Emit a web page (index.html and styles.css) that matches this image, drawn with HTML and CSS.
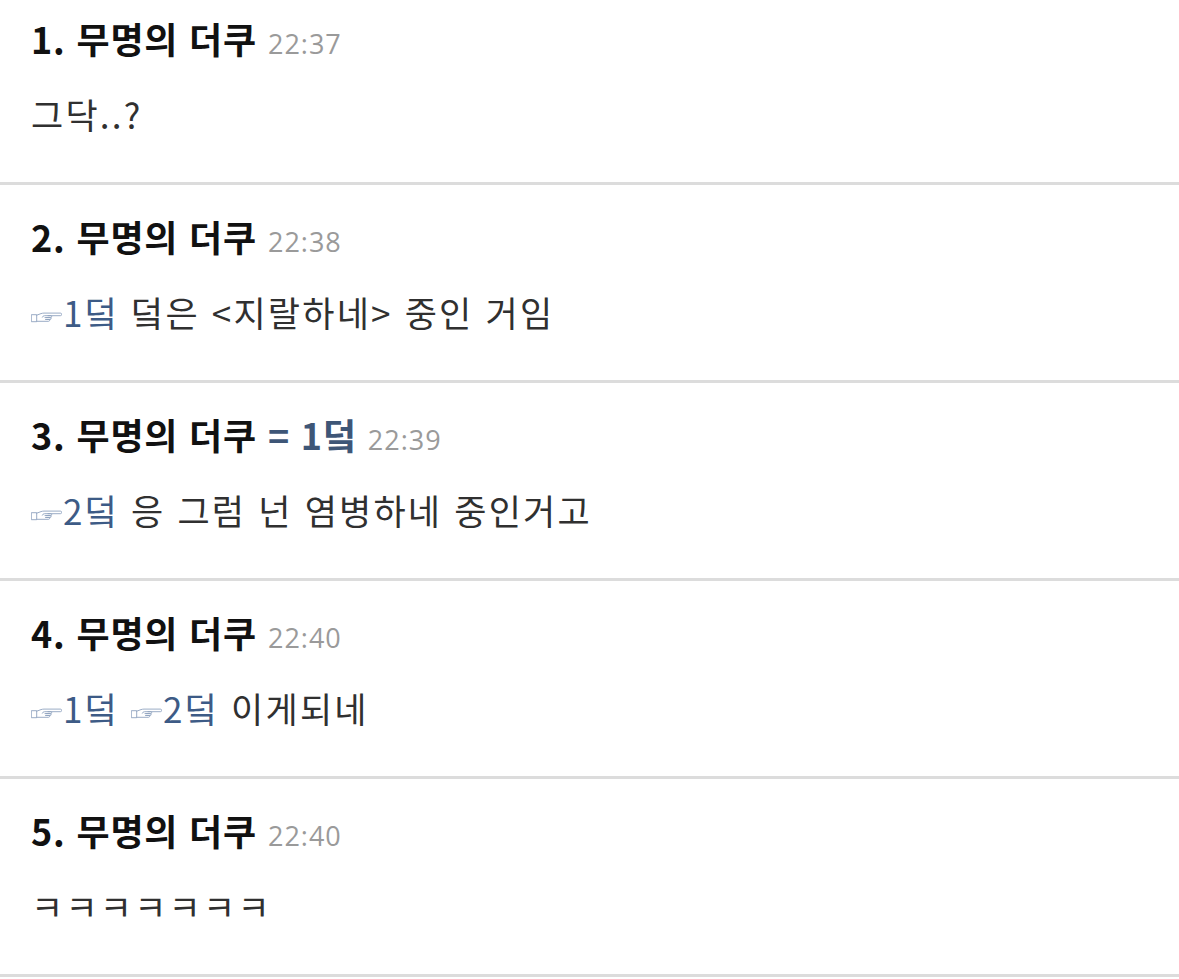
FILE: index.html
```html
<!DOCTYPE html>
<html lang="ko">
<head>
<meta charset="utf-8">
<title>댓글</title>
<link rel="stylesheet" href="styles.css">
</head>
<body>
<svg width="0" height="0" class="defs" aria-hidden="true">
  <defs>
    <symbol id="hand" viewBox="0 0 31 12">
      <path d="M0.7 2.7h5v7h-5z M5.7 3.2 L10 1.6 Q11.5 1.1 13 1.1 H29.4 Q30.6 1.1 30.6 2.4 Q30.6 3.7 29.4 3.7 H17 M5.7 9.3 H17.5 Q18.6 9.3 18.6 8.4 Q18.6 7.5 17.5 7.5 H14.5 M15.8 7.5 H19 Q20.1 7.5 20.1 6.6 Q20.1 5.6 19 5.6 H14 M15 5.6 H19.6 Q20.7 5.6 20.7 4.65 Q20.7 3.7 19.6 3.7 H13.5 Q11.8 3.7 11.3 5.2" fill="none" stroke="currentColor" stroke-width="0.9" stroke-linejoin="round" stroke-linecap="round"/>
    </symbol>
  </defs>
</svg>
<main class="comments">
  <article class="comment">
    <div class="head"><span class="name">1. 무명의 더쿠</span><span class="time">22:37</span></div>
    <div class="body">그닥..?</div>
  </article>
  <article class="comment">
    <div class="head"><span class="name">2. 무명의 더쿠</span><span class="time">22:38</span></div>
    <div class="body"><a class="ref"><svg class="hand"><use href="#hand"/></svg>1덬</a> 덬은 &lt;지랄하네&gt; 중인 거임</div>
  </article>
  <article class="comment">
    <div class="head"><span class="name">3. 무명의 더쿠</span><span class="same">= 1덬</span><span class="time">22:39</span></div>
    <div class="body"><a class="ref"><svg class="hand"><use href="#hand"/></svg>2덬</a> 응 그럼 넌 염병하네 중인거고</div>
  </article>
  <article class="comment">
    <div class="head"><span class="name">4. 무명의 더쿠</span><span class="time">22:40</span></div>
    <div class="body"><a class="ref"><svg class="hand"><use href="#hand"/></svg>1덬</a> <a class="ref"><svg class="hand"><use href="#hand"/></svg>2덬</a> 이게되네</div>
  </article>
  <article class="comment">
    <div class="head"><span class="name">5. 무명의 더쿠</span><span class="time">22:40</span></div>
    <div class="body">ㅋㅋㅋㅋㅋㅋㅋ</div>
  </article>
</main>
</body>
</html>
```
FILE: styles.css
```css
html, body {
  margin: 0;
  padding: 0;
  background: #ffffff;
}
body {
  font-family: "Noto Sans CJK KR", "Noto Sans", sans-serif;
  overflow: hidden;
}
.defs {
  position: absolute;
  width: 0;
  height: 0;
}
.comments {
  margin-top: -13px;
}
.comment {
  box-sizing: border-box;
  height: 198px;
  border-bottom: 3px solid #dcdcdc;
  padding: 29px 30px 0 31px;
}
.head {
  display: flex;
  align-items: baseline;
  height: 44px;
  line-height: 44px;
}
.name {
  font-size: 36px;
  font-weight: 700;
  color: #111111;
  letter-spacing: 0.8px;
}
.same {
  font-size: 36px;
  font-weight: 700;
  color: #3e5677;
  margin-left: 11px;
  letter-spacing: 0.8px;
}
.time {
  font-family: "Open Sans", "Noto Sans", sans-serif;
  font-size: 27px;
  color: #9a9a9a;
  margin-left: 11px;
  letter-spacing: 1px;
}
.body {
  margin-top: 32px;
  font-size: 35px;
  line-height: 44px;
  color: #303030;
  font-weight: 400;
  letter-spacing: 2.2px;
}
.ref {
  color: #3d5b86;
  text-decoration: none;
}
.hand {
  width: 31px;
  height: 12px;
  color: #8fa3c0;
  margin-right: 1px;
  vertical-align: 3px;
}
```
